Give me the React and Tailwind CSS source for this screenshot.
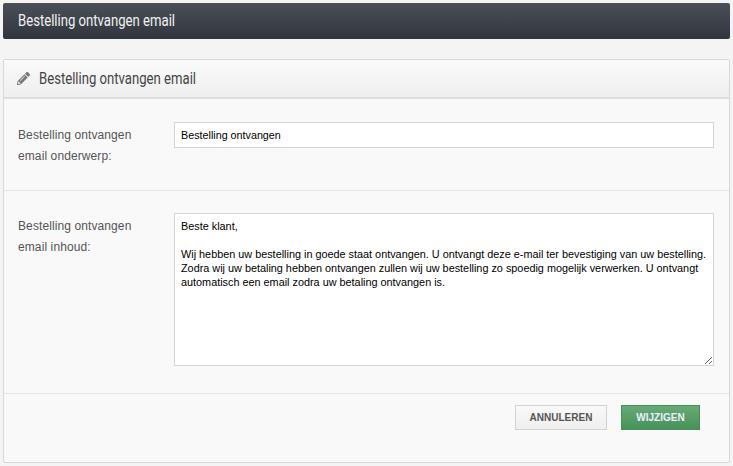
import { FaPencilAlt } from "react-icons/fa";

const bodyText = `Beste klant,

Wij hebben uw bestelling in goede staat ontvangen. U ontvangt deze e-mail ter bevestiging van uw bestelling. Zodra wij uw betaling hebben ontvangen zullen wij uw bestelling zo spoedig mogelijk verwerken. U ontvangt automatisch een email zodra uw betaling ontvangen is.`;

function FieldRow({ label, children, className }) {
  return (
    <div className={`flex ${className}`}>
      <label className="w-[170px] shrink-0 pl-[14px] pr-6 pt-[3px] text-[12px] leading-[21px] text-[#555] tracking-[0.1px]">{label}</label>
      <div className="flex-1 pr-[15px]">{children}</div>
    </div>
  );
}

export default function App() {
  return (
    <div className="w-[733px] h-[466px] overflow-hidden bg-[#f4f4f4] px-[3px] pt-[3px] font-['Liberation_Sans',Arial,sans-serif]">
      {/* Page title */}
      <div className="h-[36px] rounded-[2px] bg-gradient-to-b from-[#4b4f58] to-[#31353d] pl-[15px] flex items-center">
        <span className="inline-block origin-left scale-x-[0.82] whitespace-nowrap text-[16px] text-[#f2f2f2] font-['Roboto',sans-serif]">
          Bestelling ontvangen email
        </span>
      </div>

      {/* Card */}
      <div className="mt-[20px] h-[404px] border border-[#d8d8d8] rounded-[2px] bg-[#f9f9f9]">
        <div className="h-[39px] border-b-2 border-[#dedede] bg-gradient-to-b from-[#fafafa] to-[#efefef] pl-[13px] flex items-center gap-[9px]">
          <FaPencilAlt className="w-[13px] h-[13px] text-[#777]" />
          <span className="inline-block origin-left scale-x-[0.82] whitespace-nowrap text-[16px] text-[#444] font-['Roboto',sans-serif]">
            Bestelling ontvangen email
          </span>
        </div>

        <FieldRow label="Bestelling ontvangen email onderwerp:" className="h-[92px] pt-[23px] border-b border-[#e6e6e6]">
          <input
            readOnly
            value="Bestelling ontvangen"
            className="w-full h-[26px] px-[6px] bg-white border border-[#d4d4d4] text-[10.75px] text-black outline-none"
          />
        </FieldRow>

        <FieldRow label="Bestelling ontvangen email inhoud:" className="h-[203px] pt-[22px] border-b border-[#e6e6e6]">
          <textarea
            readOnly
            value={bodyText}
            className="block w-full h-[153px] px-[6px] py-[5px] bg-white border border-[#d4d4d4] text-[10.85px] leading-[14px] text-black outline-none"
          />
        </FieldRow>

        <div className="flex justify-end gap-[14px] pt-[11px] pr-[29px]">
          <button className="w-[92px] h-[25px] border border-[#d2d2d2] bg-gradient-to-b from-[#f9f9f9] to-[#efefef] text-[10px] font-bold text-[#555]">
            ANNULEREN
          </button>
          <button className="w-[79px] h-[25px] border border-[#4a8f5a] bg-gradient-to-b from-[#68aa77] to-[#47915a] text-[10px] font-bold text-[#eef]">
            WIJZIGEN
          </button>
        </div>
      </div>
    </div>
  );
}
